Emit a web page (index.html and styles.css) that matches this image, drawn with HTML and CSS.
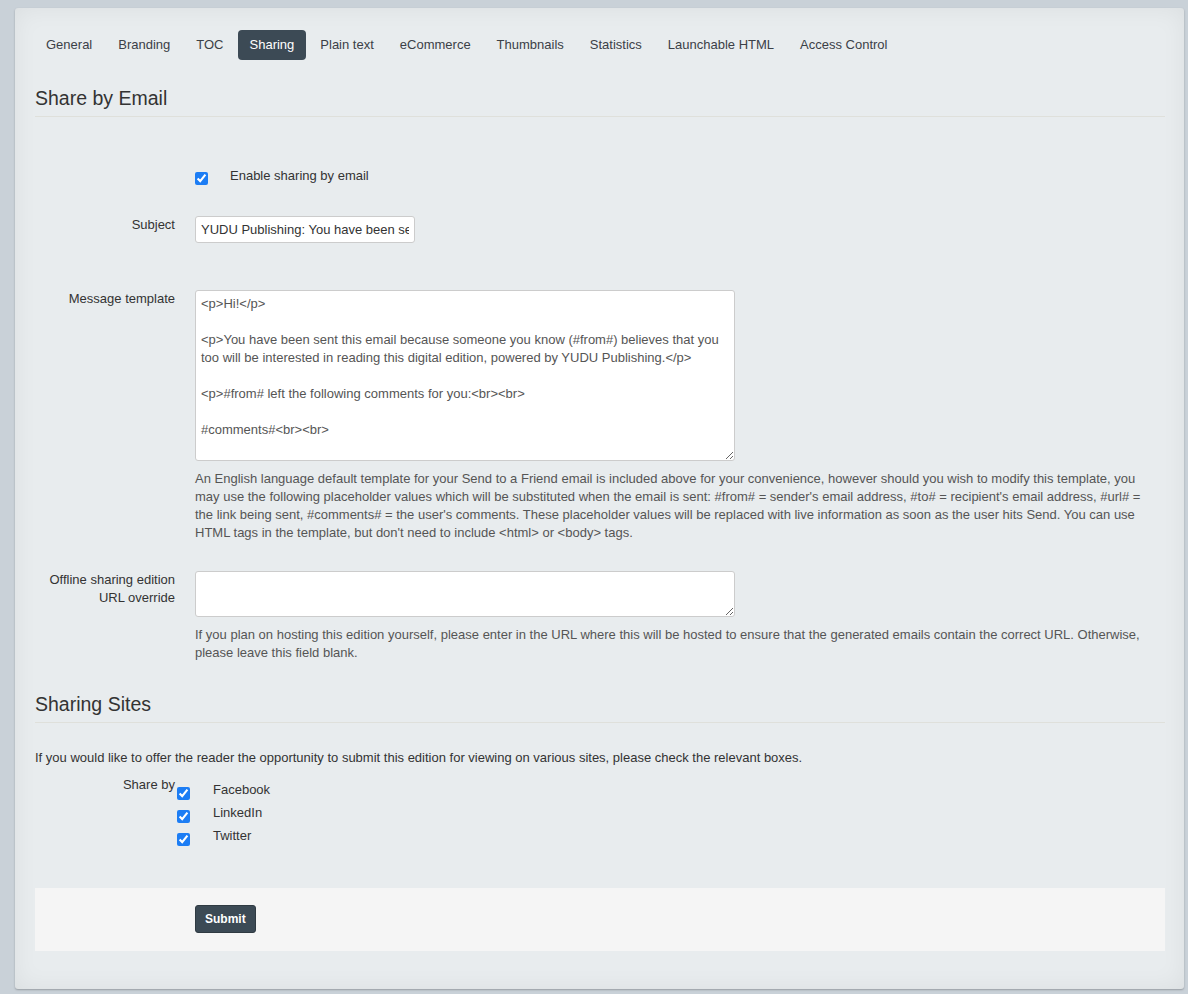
FILE: index.html
```html
<!DOCTYPE html>
<html lang="en">
<head>
    <meta charset="UTF-8">
    <meta name="viewport" content="width=device-width, initial-scale=1.0">
    <title>Edition settings - Sharing</title>
    <link rel="stylesheet" href="styles.css">
</head>
<body>
    <div class="panel">
        <ul class="tabs">
            <li><a href="#">General</a></li>
            <li><a href="#">Branding</a></li>
            <li><a href="#">TOC</a></li>
            <li class="active"><a href="#">Sharing</a></li>
            <li><a href="#">Plain text</a></li>
            <li><a href="#">eCommerce</a></li>
            <li><a href="#">Thumbnails</a></li>
            <li><a href="#">Statistics</a></li>
            <li><a href="#">Launchable HTML</a></li>
            <li><a href="#">Access Control</a></li>
        </ul>

        <form class="form-horizontal">
            <h2 class="legend">Share by Email</h2>

            <div class="control-group enable-row">
                <div class="control-label"></div>
                <div class="controls">
                    <label class="checkbox-inline">
                        <input type="checkbox" checked>
                        <span>Enable sharing by email</span>
                    </label>
                </div>
            </div>

            <div class="control-group subject-row">
                <label class="control-label">Subject</label>
                <div class="controls">
                    <input type="text" class="text-input" value="YUDU Publishing: You have been sent an edition">
                </div>
            </div>

            <div class="control-group message-row">
                <label class="control-label">Message template</label>
                <div class="controls">
                    <textarea class="template">&lt;p&gt;Hi!&lt;/p&gt;

&lt;p&gt;You have been sent this email because someone you know (#from#) believes that you too will be interested in reading this digital edition, powered by YUDU Publishing.&lt;/p&gt;

&lt;p&gt;#from# left the following comments for you:&lt;br&gt;&lt;br&gt;

#comments#&lt;br&gt;&lt;br&gt;

To read the edition, simply click on the link below:&lt;br&gt;&lt;br&gt;

#url#&lt;/p&gt;</textarea>
                    <p class="help-block template-help">An English language default template for your Send to a Friend email is included above for your convenience, however should you wish to modify this template, you may use the following placeholder values which will be substituted when the email is sent: #from# = sender's email address, #to# = recipient's email address, #url# = the link being sent, #comments# = the user's comments. These placeholder values will be replaced with live information as soon as the user hits Send. You can use HTML tags in the template, but don't need to include &lt;html&gt; or &lt;body&gt; tags.</p>
                </div>
            </div>

            <div class="control-group offline-row">
                <label class="control-label">Offline sharing edition URL override</label>
                <div class="controls">
                    <textarea class="url-override"></textarea>
                    <p class="help-block">If you plan on hosting this edition yourself, please enter in the URL where this will be hosted to ensure that the generated emails contain the correct URL. Otherwise, please leave this field blank.</p>
                </div>
            </div>

            <h2 class="legend sites-legend">Sharing Sites</h2>
            <p class="intro">If you would like to offer the reader the opportunity to submit this edition for viewing on various sites, please check the relevant boxes.</p>

            <div class="control-group share-row">
                <label class="control-label">Share by</label>
                <div class="site-list">
                    <label class="site"><input type="checkbox" checked><span>Facebook</span></label>
                    <label class="site"><input type="checkbox" checked><span>LinkedIn</span></label>
                    <label class="site"><input type="checkbox" checked><span>Twitter</span></label>
                </div>
            </div>

            <div class="form-actions">
                <button type="submit" class="btn">Submit</button>
            </div>
        </form>
    </div>
</body>
</html>
```

FILE: styles.css
```css
body {
    margin: 0;
    padding: 8px 4px 6px 15px;
    background: #c9d1d8;
    font-family: "Liberation Sans", Arial, sans-serif;
    font-size: 13px;
    color: #333;
}

.panel {
    background: #e8ecee;
    border-radius: 3px;
    box-shadow: 0 1px 2px rgba(0, 0, 0, 0.25), inset 0 0 24px rgba(0, 0, 0, 0.06);
    padding: 22px 19px 38px 20px;
}

.tabs {
    list-style: none;
    margin: 0;
    padding: 0;
    display: flex;
    gap: 2px;
}

.tabs a {
    display: block;
    height: 30px;
    line-height: 30px;
    padding: 0 12px;
    border-radius: 4px;
    color: #3b4047;
    text-decoration: none;
}

.tabs li:first-child a {
    padding-left: 11px;
}

.tabs .active a {
    background: #3c4a55;
    color: #fff;
}

.legend {
    margin: 27px 0 0;
    padding-bottom: 7px;
    font-size: 19.5px;
    font-weight: normal;
    line-height: 22px;
    color: #333;
    border-bottom: 1px solid #dfe0db;
}

.control-group {
    display: flex;
}

.control-label {
    width: 140px;
    flex-shrink: 0;
    text-align: right;
    line-height: 18px;
}

.controls {
    margin-left: 20px;
    flex: 1;
}

.enable-row {
    margin-top: 50px;
    height: 18px;
}

.checkbox-inline {
    display: flex;
    line-height: 18px;
}

.checkbox-inline span {
    margin-left: 22px;
}

input[type="checkbox"] {
    width: 13px;
    height: 13px;
    margin: 0;
    accent-color: #1c7df4;
}

.checkbox-inline input {
    margin-top: 5px;
}

.subject-row {
    margin-top: 31px;
}

.text-input {
    box-sizing: border-box;
    width: 220px;
    height: 27px;
    padding: 4px 5px;
    border: 1px solid #ccc;
    border-radius: 3px;
    background: #fff;
    font-family: inherit;
    font-size: 13px;
    color: #333;
}

textarea {
    display: block;
    box-sizing: border-box;
    width: 540px;
    padding: 4px 5px;
    border: 1px solid #ccc;
    border-radius: 3px;
    background: #fff;
    font-family: inherit;
    font-size: 13px;
    line-height: 18px;
    color: #555;
    overflow: hidden;
}

.message-row {
    margin-top: 47px;
}

.template {
    height: 171px;
    padding-bottom: 0;
}

.help-block {
    margin: 9px 0 0;
    line-height: 18px;
    color: #555;
}

.template-help {
    max-width: 952px;
}

.offline-row {
    margin-top: 29px;
}

.url-override {
    height: 46px;
}

.sites-legend {
    margin-top: 31px;
}

.intro {
    margin: 26px 0 0;
    line-height: 18px;
}

.share-row {
    margin-top: 9px;
}

.site-list {
    margin-left: 2px;
    padding-top: 5px;
}

.site {
    display: flex;
    height: 23px;
    line-height: 18px;
}

.site input {
    margin-top: 6px;
}

.site span {
    margin-left: 23px;
}

.form-actions {
    margin-top: 38px;
    background: #f5f5f5;
    padding: 17px 0 18px 160px;
}

.btn {
    height: 28px;
    padding: 0 9px;
    border: 1px solid #2f3a42;
    border-radius: 3px;
    background: #3c4a55;
    color: #fff;
    font-family: inherit;
    font-size: 12px;
    font-weight: bold;
    cursor: pointer;
}
```
